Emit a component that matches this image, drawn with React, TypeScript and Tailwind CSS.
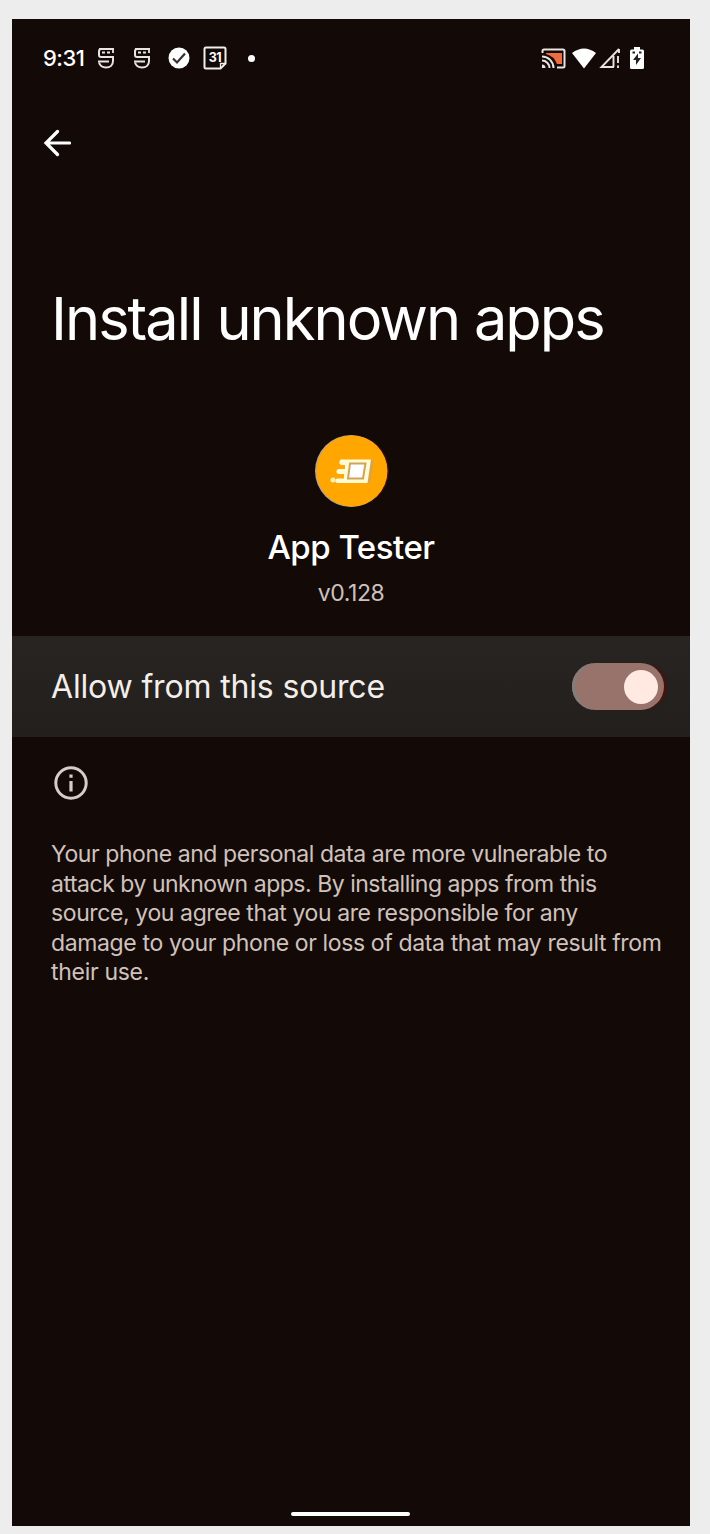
import React from "react";

function Mask() {
  return (
    <svg className="h-[22px] w-[18px]" viewBox="0 0 18 22" fill="none" stroke="#e8e4e1" strokeWidth="2">
      <path d="M17 2H4Q2 2 2 4.500V8q0 2 2 2h12v4c0 3.800-2.800 6.500-7 6.500-3.800 0-6-1.800-7-5" />
      <path d="M16 2v4M1 14.500h11M2 2h3" strokeWidth="1.800" />
      <path d="M5 5.500h3M10 5.500h3" strokeWidth="2" />
    </svg>
  );
}

function StatusBar() {
  return (
    <div className="flex h-[78px] items-center pl-[31px] pr-[46px] text-white">
      <span className="w-[42px] whitespace-nowrap text-[22px] font-medium leading-none tracking-[-0.500px]">9:31</span>
      <div className="ml-[12px] flex items-center">
        <Mask />
        <div className="ml-[18px] flex"><Mask /></div>
        <svg className="ml-[17px] h-[22px] w-[22px]" viewBox="0 0 22 22">
          <circle cx="11" cy="11" r="10.500" fill="#fff" />
          <path d="M5 11.500l4 4 8-9" fill="none" stroke="#37312e" strokeWidth="2.200" />
        </svg>
        <div className="relative ml-[13px] flex h-[24px] w-[24px] items-center justify-center">
          <svg className="absolute inset-0 h-[24px] w-[24px]" viewBox="0 0 24 24" fill="none" stroke="#f1eeec" strokeWidth="2">
            <path d="M3 1.500h18q1.500 0 1.500 1.500v14.500l-5 5H3Q1.500 22.500 1.500 21V3Q1.500 1.500 3 1.500z" />
            <path d="M22 17.500h-4.500v4.500" strokeWidth="1.300" />
          </svg>
          <span className="relative text-[12.500px] font-bold leading-none tracking-[-0.500px]">31</span>
        </div>
        <span className="ml-[21px] h-[7px] w-[7px] rounded-full bg-white" />
      </div>
      <div className="ml-auto flex items-center">
        <svg className="h-[21px] w-[25px]" viewBox="0 0 25 21" fill="none" stroke="#e9e4e1" strokeWidth="2">
          <path d="M5 5h16v11h-5Q13 8 5 6z" fill="#ed6c40" stroke="none" />
          <path d="M1.500 5V3q0-1.500 1.500-1.500h19q1.500 0 1.500 1.500v15q0 1.500-1.500 1.500h-6" />
          <path d="M1 8.500A11.500 11.500 0 0 1 12.500 20M1 12.500A7.500 7.500 0 0 1 8.500 20" />
          <path d="M1 16.500A3.500 3.500 0 0 1 4.500 20H1z" fill="#e9e4e1" stroke="none" />
        </svg>
        <svg className="ml-[5px] h-[21px] w-[26px]" viewBox="0 0 26 21"><path d="M1 5Q13-4 25 5L13 20.500z" fill="#fff" /></svg>
        <svg className="ml-[2px] h-[21px] w-[22px]" viewBox="0 0 22 21" fill="none" stroke="#e9e4e1" strokeWidth="2">
          <path d="M20 1L2.500 19H15M20 1v4M19 8v7M19 17.500v2.500M14.500 8v11" strokeWidth="1.900" />
        </svg>
        <svg className="ml-[9px] h-[22px] w-[14px]" viewBox="0 0 14 22">
          <path d="M4 0h6v2.500h2.500Q14 2.500 14 4v16.500q0 1.500-1.500 1.500h-11Q0 22 0 20.500V4q0-1.500 1.500-1.500H4z" fill="#fff" />
          <path d="M8 6.500L3 13h3v5l5-7H8zM2.500 4.500h2.500v2H2.500zM9 4.500h2.500v2H9z" fill="#24201e" />
        </svg>
      </div>
    </div>
  );
}

export default function App() {
  return (
    <div className="h-[1534px] w-[710px] bg-[#ededed] pl-[12px] pt-[19px] font-['Inter','Roboto',sans-serif]">
      <main className="flex h-[1507px] w-[678px] flex-col bg-[#130a08]">
        <StatusBar />
        <button className="ml-[31px] mt-[32px] h-[28px] w-[28px]" aria-label="Back">
          <svg className="h-[28px] w-[28px]" viewBox="0 0 28 28" fill="none" stroke="#fff" strokeWidth="3.200" strokeLinecap="round">
            <path d="M26.500 14H3M14.500 2.500L3 14l11.500 11.500" />
          </svg>
        </button>
        <h1 className="ml-[39px] mt-[125px] h-[72px] whitespace-nowrap text-[59.500px] font-normal leading-[72px] tracking-[-1.980px] text-white"><span>Install unknown apps</span></h1>
        <section className="mt-[81px] flex h-[201px] shrink-0 flex-col items-center">
          <svg className="ml-px h-[72px] w-[74px] shrink-0" viewBox="0 0 74 72">
            <circle cx="38.500" cy="36" r="35.500" fill="#4a0c05" />
            <circle cx="36" cy="36" r="36" fill="#b5a39c" />
            <circle cx="37" cy="36" r="35.500" fill="#ffa600" />
            <g transform="translate(-1 0)">
              <path d="M57 25l-3 23h2l4-23z" fill="#d2a35b" />
              <path d="M29 24.500h28L53.500 48H23.500a2 2 0 0 1 0-4.500H30V39h-5a2 2 0 0 1 0-5h6v-4h-3.500a2.500 2.500 0 0 1 1.500-5.500z" fill="#fffbd5" />
              <path d="M36 28.500h15.500l-2.500 15H34z" fill="#fff" stroke="#cfa45b" strokeWidth="2" />
              <circle cx="19" cy="45" r="2.500" fill="#fff0b0" />
            </g>
          </svg>
          <h2 className="mt-[19px] whitespace-nowrap text-[33px] font-medium leading-[42px] tracking-[-0.500px] text-white"><span>App Tester</span></h2>
          <p className="mt-[9px] whitespace-nowrap text-[23px] leading-[32px] tracking-[-0.400px] text-[#cdc2be]"><span>v0.128</span></p>
        </section>
        <label className="flex h-[101px] shrink-0 items-center justify-between bg-linear-to-b from-[#272421] to-[#231f1c] pl-[39px] pr-[26px]">
          <span className="whitespace-nowrap text-[32px] leading-[40px] tracking-[-0.160px] text-[#f3eeeb]">Allow from this source</span>
          <span className="flex h-[47px] w-[92px] items-center justify-end rounded-full bg-[#98736b] pr-[6px] shadow-[inset_5px_0_1px_-1px_#867c78,4px_0_2px_-1px_#48130c]">
            <span className="h-[34px] w-[34px] rounded-full bg-[#ffe9e0]" />
          </span>
        </label>
        <svg className="ml-[42px] mt-[29px] h-[34px] w-[34px] shrink-0" viewBox="0 0 34 34" fill="none" stroke="#d9cbc7" strokeWidth="3">
          <circle cx="17" cy="17" r="15.200" />
          <path d="M17 15v10.500M17 8.500v3.300" strokeWidth="3.200" />
        </svg>
        <div className="ml-[39px] mt-[40px] flex flex-col items-start whitespace-nowrap text-[23px] leading-[29.500px] text-[#cfc2be]">
          <span className="tracking-[-0.420px]">Your phone and personal data are more vulnerable to</span>
          <span className="tracking-[-0.480px]">attack by unknown apps. By installing apps from this</span>
          <span className="tracking-[-0.390px]">source, you agree that you are responsible for any</span>
          <span className="tracking-[-0.370px]">damage to your phone or loss of data that may result from</span>
          <span className="tracking-[-0.300px]">their use.</span>
        </div>
        <div className="mb-[10px] ml-[279px] mt-auto h-[4px] w-[119px] rounded-full bg-white" />
      </main>
    </div>
  );
}
